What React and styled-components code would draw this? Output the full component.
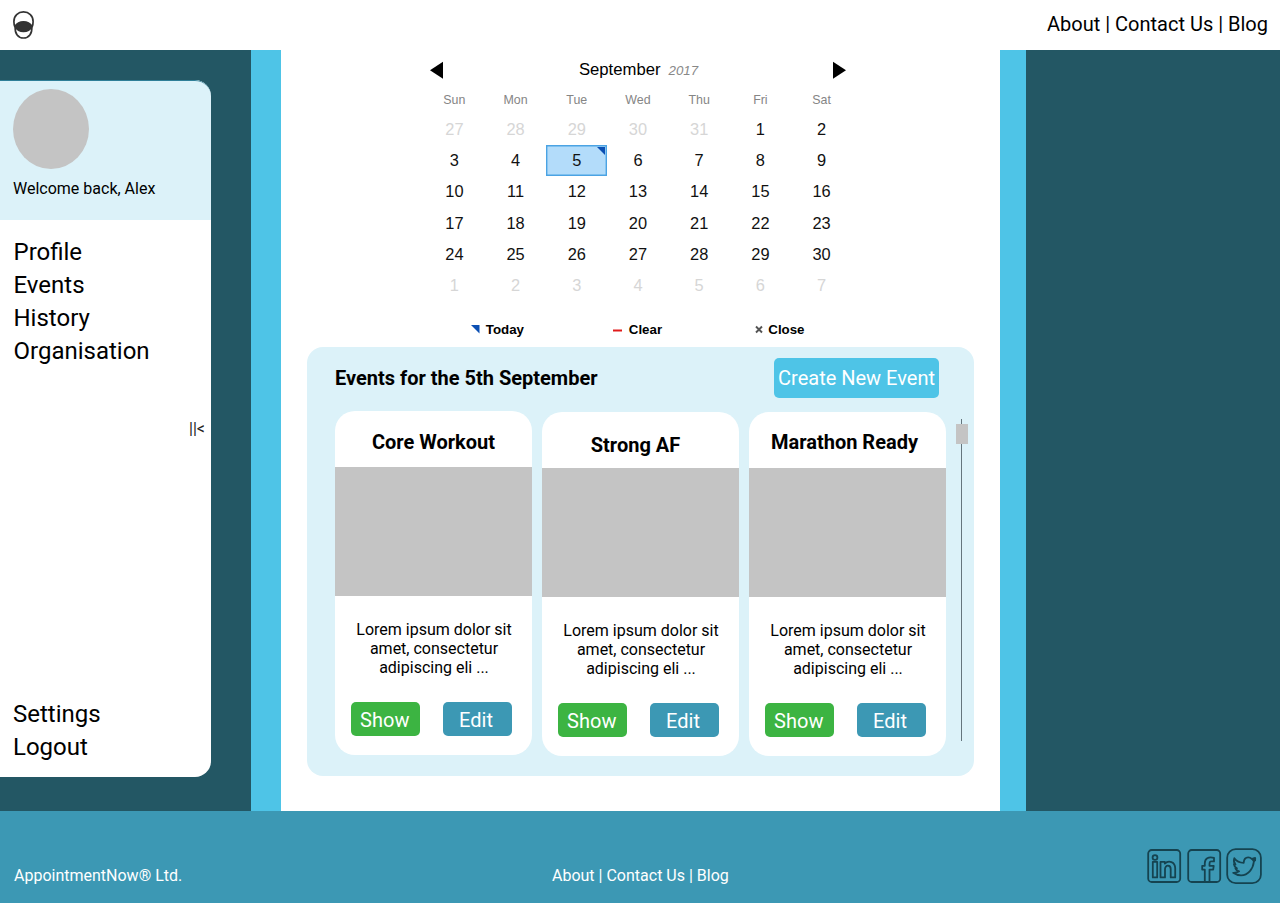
import React from "react";
import styled, { createGlobalStyle } from "styled-components";

const GlobalStyle = createGlobalStyle`
  *, *::before, *::after { box-sizing: border-box; }
  body { margin: 0; background: #fff; color: #000; font-family: Roboto, "Liberation Sans", sans-serif; }
  button { border: 0; padding: 0; margin: 0; background: none; font: inherit; color: inherit; }
`;

const Page = styled.div`
  width: 1280px;
  height: 903px;
  display: flex;
  flex-direction: column;
  overflow: hidden;
`;

const Header = styled.header`
  height: 50px;
  flex: none;
  display: flex;
  align-items: center;
  justify-content: space-between;
  padding: 0 12px 2px 13px;
  background: #fff;
`;

const HeaderLinks = styled.nav`
  font-size: 20px;
  line-height: 24px;
`;

const Body = styled.div`
  height: 761px;
  flex: none;
  display: flex;
  background: #235764;
`;

const SideColumn = styled.div`
  width: 251px;
  padding: 30px 40px 34px 0;
  display: flex;
`;

const Stripe = styled.div`
  width: ${(p) => p.$width}px;
  background: #4ec4e7;
`;

const Content = styled.main`
  width: 719px;
  background: #fff;
  display: flex;
  flex-direction: column;
`;

const Sidebar = styled.aside`
  flex: 1;
  display: flex;
  flex-direction: column;
  background: #fff;
  border-radius: 0 16px 16px 0;
  overflow: hidden;
`;

const Welcome = styled.div`
  height: 140px;
  flex: none;
  padding: 8px 13px 0;
  background: #dcf2f9;
  border-top: 1px solid #2f7f98;
  border-radius: 0 16px 0 0;
  font-size: 16px;
  line-height: 19px;
`;

const Avatar = styled.div`
  width: 76px;
  height: 80px;
  margin-bottom: 10px;
  border-radius: 50%;
  background: #c4c4c4;
`;

const Menu = styled.nav`
  display: flex;
  flex-direction: column;
  padding: ${(p) => p.$pad};
  font-size: 24px;
  line-height: 33px;
`;

const Collapse = styled.button`
  align-self: flex-end;
  margin: 51px 6px auto 0;
  font-size: 16px;
  line-height: 19px;
  color: #222;
`;

const Calendar = styled.section`
  width: 428.4px;
  height: 297px;
  flex: none;
  margin-left: 142.8px;
  font-family: "Liberation Sans", Arial, sans-serif;
`;

const MonthBar = styled.div`
  height: 40px;
  padding: 0 6px;
  display: flex;
  align-items: center;
  justify-content: space-between;
`;

const Month = styled.div`
  padding-left: 1px;
  font-size: 16.7px;
  line-height: 20px;
`;

const Year = styled.em`
  margin-left: 8px;
  font-size: 13.3px;
  color: #888;
`;

const Weekdays = styled.div`
  display: grid;
  grid-template-columns: repeat(7, 1fr);
  height: 23.3px;
  padding-top: 1px;
  font-size: 12.4px;
  line-height: 19px;
  text-align: center;
  color: #858585;
`;

const Days = styled.div`
  display: grid;
  grid-template-columns: repeat(7, 1fr);
  grid-auto-rows: 31.3px;
`;

const Day = styled.div`
  position: relative;
  display: flex;
  align-items: center;
  justify-content: center;
  padding-top: 0.6px;
  font-size: 16.4px;
  color: ${(p) => (p.$muted ? "#d6d6d6" : "#111")};
  ${(p) => p.$selected && "background: #b3dcfa; box-shadow: inset 0 0 0 1.4px #4ba3e3;"}
`;

const Corner = styled.svg`
  position: absolute;
  top: 2px;
  right: 2px;
`;

const Legend = styled.div`
  display: grid;
  grid-template-columns: repeat(3, 142px);
  padding: 19px 0 0 47px;
  font-size: 13.3px;
  font-weight: bold;
  line-height: 19px;
`;

const LegendItem = styled.div`
  display: flex;
  align-items: center;
  svg { width: 9px; height: 9px; margin-right: ${(p) => p.$gap}px; }
`;

const Events = styled.section`
  width: 667px;
  height: 429px;
  margin-left: 26px;
  padding: 11px 6px 0 28px;
  border-radius: 16px;
  background: #dcf2f9;
`;

const EventsHead = styled.div`
  display: flex;
  align-items: center;
  justify-content: space-between;
  height: 40px;
  padding-right: 29px;
`;

const EventsTitle = styled.h2`
  margin: 0;
  font-size: 20px;
  font-weight: 700;
  line-height: 24px;
`;

const CreateButton = styled.button`
  width: 165px;
  height: 40px;
  border-radius: 5px;
  background: #4ec4e7;
  color: #fff;
  font-size: 20px;
  white-space: nowrap;
`;

const EventsRow = styled.div`
  display: flex;
  padding-top: 13px;
`;

const Card = styled.article`
  width: 197px;
  height: 344px;
  flex: none;
  margin: ${(p) => p.$drop || 0}px 10px 0 0;
  border-radius: 20px;
  background: #fff;
  text-align: center;
`;

const CardTitle = styled.h3`
  height: 56px;
  margin: 0;
  padding: ${(p) => p.$top}px ${(p) => p.$right || 0}px 0 0;
  font-size: 20px;
  font-weight: 700;
  line-height: 24px;
`;

const CardImage = styled.div`
  height: 129px;
  background: #c4c4c4;
`;

const CardText = styled.p`
  height: 57px;
  margin: 24px 15.5px 25px 16.5px;
  font-size: 16px;
  line-height: 19px;
`;

const CardActions = styled.div`
  display: flex;
  gap: 23px;
  padding-left: 16px;
`;

const ActionButton = styled.button`
  width: 69px;
  height: 34px;
  padding: 1px ${(p) => p.$inset}px 0 0;
  border-radius: 5px;
  background: ${(p) => p.$color};
  color: #fff;
  font-size: 20px;
`;

const ScrollTrack = styled.div`
  width: 12px;
  height: 322px;
  margin: 8px 0 0 auto;
  padding-top: 5px;
  background: linear-gradient(#64757d, #64757d) 5px 0 / 1px 100% no-repeat;
`;

const ScrollThumb = styled.div`
  height: 20px;
  background: #c4c4c4;
`;

const Footer = styled.footer`
  height: 92px;
  flex: none;
  display: grid;
  grid-template-columns: 538px 1fr 115px;
  align-items: start;
  padding: 37px 18px 0 14px;
  background: #3c98b4;
  color: #fff;
  font-size: 16px;
  line-height: 19px;
`;

const FooterText = styled.div`
  padding-top: 18px;
`;

const Socials = styled.div`
  display: flex;
  svg {
    flex: none;
    overflow: visible;
    fill: none;
    stroke: #154350;
    stroke-width: 1.8;
    stroke-linejoin: round;
  }
`;

const Logo = () => (
  <svg width="22" height="30" viewBox="0 0 22 30" fill="none" stroke="#333" strokeWidth="1.7">
    <path d="M1.900 18C1.100 16 .9 14 .9 12.400C.9 6.800 5 2.900 10.500 2.900S20.100 6.800 20.100 12.400C20.100 14 19.900 16 19.100 18" />
    <path d="M2.200 18C1.700 24.500 5.100 29 10.500 29S19.300 24.500 18.800 18" />
    <path d="M2 17.500C4 14.300 6.800 12.800 10.500 12.800S17 14.300 19 17.500C17.100 20.900 14.300 22.400 10.500 22.400S4 20.900 2 17.500Z" fill="#333" />
  </svg>
);

const Arrow = ({ right }) => (
  <svg width="13" height="18" viewBox="0 0 13 18">
    <path d={right ? "M0 .8v17L13 9.300z" : "M13 .8v17L0 9.300z"} />
  </svg>
);

const LinkedIn = () => (
  <svg width="40" height="36" viewBox="0 0 40 36">
    <rect x="1.200" y="2" width="32" height="32" rx="3.500" />
    <circle cx="8" cy="9.500" r="2.400" />
    <path d="M5.800 13.800h4.400v15.600H5.800zM13.500 13.800h4.300v1.700c3.900-3.600 10.400-1.800 10.400 5v8.900h-4.500v-8.300c0-4.600-5.700-4.600-5.700 0v8.300h-4.500z" />
  </svg>
);

const Facebook = () => (
  <svg width="40" height="36" viewBox="0 0 40 36">
    <rect x="1.200" y="2" width="32" height="32" rx="3.500" />
    <path d="M17.800 34V21.600h-2.600v-3.800h2.600v-2.500c0-4.800 3.400-6.800 9.200-5.400v3.500c-3.400-.4-4.500 0-4.500 2.300v2.100h4.200l-.5 3.800h-3.700V34" />
  </svg>
);

const Twitter = () => (
  <svg width="36" height="36" viewBox="0 0 36 36">
    <rect x=".2" y="1.200" width="33.700" height="34" rx="8.500" />
    <path d="M7.300 10.200c2.300 3.200 5.600 4.500 9.400 4.600.2-3.400 1.900-5.400 4.500-5.400 1.600 0 2.700.6 3.500 1.400l3.300-.7-1.100 3.400c-.9 8-6 13.800-12.800 13.800-3 0-5.600-.8-7.900-2.500 2.600.1 4.400-.4 5.900-1.500-2-.4-3.200-1.400-3.700-2.900h1.500c-1.800-1-2.800-2.400-3-4.300l1.600.4c-1.600-1.700-2-4-1.200-6.300z" />
    <path d="M25.300 11l2.900-.8-.1 2.200-1.500.6z" />
  </svg>
);

const weekdays = ["Sun", "Mon", "Tue", "Wed", "Thu", "Fri", "Sat"];
const days = [
  ...[27, 28, 29, 30, 31].map((n) => ({ n, muted: true })),
  ...Array.from({ length: 30 }, (_, i) => ({ n: i + 1, selected: i === 4 })),
  ...[1, 2, 3, 4, 5, 6, 7].map((n) => ({ n, muted: true })),
];

const events = [
  { title: "Core Workout", drop: 0, top: 19 },
  { title: "Strong AF", drop: 1, top: 21, right: 10 },
  { title: "Marathon Ready", drop: 1, top: 18, right: 6 },
];

export default function App() {
  return (
    <Page>
      <GlobalStyle />
      <Header>
        <Logo />
        <HeaderLinks>About | Contact Us | Blog</HeaderLinks>
      </Header>
      <Body>
        <SideColumn>
          <Sidebar>
            <Welcome>
              <Avatar />
              Welcome back, Alex
            </Welcome>
            <Menu $pad="16px 13px 0 13.5px">
              <span>Profile</span>
              <span>Events</span>
              <span>History</span>
              <span>Organisation</span>
            </Menu>
            <Collapse>||&lt;</Collapse>
            <Menu $pad="0 13px 13px">
              <span>Settings</span>
              <span>Logout</span>
            </Menu>
          </Sidebar>
        </SideColumn>
        <Stripe $width={30} />
        <Content>
          <Calendar>
            <MonthBar>
              <Arrow />
              <Month>
                September<Year>2017</Year>
              </Month>
              <Arrow right />
            </MonthBar>
            <Weekdays>
              {weekdays.map((d) => (
                <span key={d}>{d}</span>
              ))}
            </Weekdays>
            <Days>
              {days.map((d, i) => (
                <Day key={i} $muted={d.muted} $selected={d.selected}>
                  {d.n}
                  {d.selected && (
                    <Corner width="8" height="8" viewBox="0 0 8 8">
                      <path d="M0 0h8v8z" fill="#0b4fb3" />
                    </Corner>
                  )}
                </Day>
              ))}
            </Days>
            <Legend>
              <LegendItem $gap={6}>
                <svg viewBox="0 0 9 9"><path d="M0 0h8.500v8.500z" fill="#0b4fb3" /></svg>
                Today
              </LegendItem>
              <LegendItem $gap={7}>
                <svg viewBox="0 0 9 9"><path d="M0 5.500h9.500" stroke="#e01b1b" strokeWidth="2" /></svg>
                Clear
              </LegendItem>
              <LegendItem $gap={4.5}>
                <svg viewBox="0 0 9 9"><path d="M1 1.500l6 6M7 1.500l-6 6" stroke="#555" strokeWidth="1.900" /></svg>
                Close
              </LegendItem>
            </Legend>
          </Calendar>
          <Events>
            <EventsHead>
              <EventsTitle>Events for the 5th September</EventsTitle>
              <CreateButton>Create New Event</CreateButton>
            </EventsHead>
            <EventsRow>
              {events.map((e) => (
                <Card key={e.title} $drop={e.drop}>
                  <CardTitle $top={e.top} $right={e.right}>{e.title}</CardTitle>
                  <CardImage />
                  <CardText>Lorem ipsum dolor sit amet, consectetur adipiscing eli ...</CardText>
                  <CardActions>
                    <ActionButton $color="#3cb442" $inset={1.5}>Show</ActionButton>
                    <ActionButton $color="#3c98b4" $inset={3}>Edit</ActionButton>
                  </CardActions>
                </Card>
              ))}
              <ScrollTrack>
                <ScrollThumb />
              </ScrollTrack>
            </EventsRow>
          </Events>
        </Content>
        <Stripe $width={26} />
      </Body>
      <Footer>
        <FooterText>AppointmentNow® Ltd.</FooterText>
        <FooterText>About | Contact Us | Blog</FooterText>
        <Socials>
          <LinkedIn />
          <Facebook />
          <Twitter />
        </Socials>
      </Footer>
    </Page>
  );
}
